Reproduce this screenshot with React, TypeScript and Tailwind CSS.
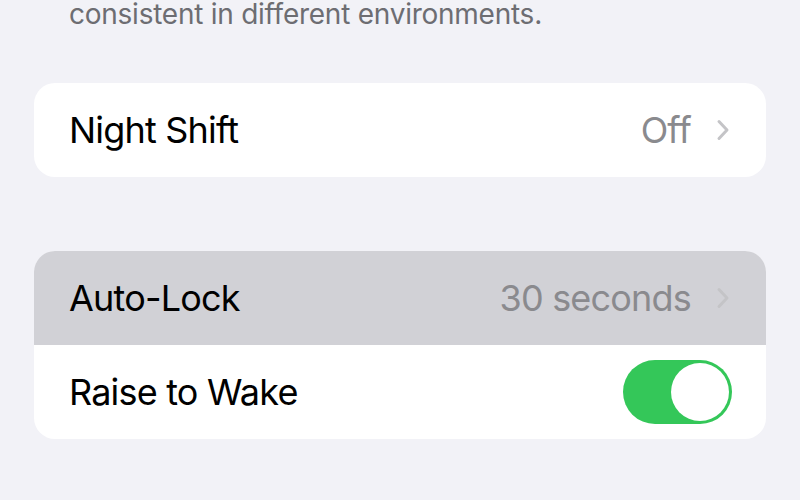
import React from "react"

function Chevron() {
  return (
    <svg width="14" height="22" viewBox="0 0 14 22" fill="none" className="ml-[25px]">
      <path d="M3 2.5 L11 11 L3 19.5" stroke="#c4c4c7" strokeWidth="3" strokeLinecap="round" strokeLinejoin="round" />
    </svg>
  )
}

function Toggle() {
  return (
    <div className="flex h-[64px] w-[109px] items-center justify-end rounded-full bg-[#34c759] p-[3px]">
      <div className="h-[58px] w-[58px] rounded-full bg-white" />
    </div>
  )
}

function Row({ label, value, pressed }: { label: string; value?: string; pressed?: boolean }) {
  return (
    <div
      className={
        "flex h-[94px] items-center justify-between pl-[35px] pr-[36px] " +
        (pressed ? "bg-[#d1d1d6]" : "bg-white")
      }
    >
      <span className="text-[36px] tracking-[-0.8px] text-black">{label}</span>
      <div className="flex items-center">
        <span className="text-[36px] tracking-[-0.8px] text-[#8a8a8e]">{value}</span>
        <Chevron />
      </div>
    </div>
  )
}

export default function App() {
  return (
    <div
      className="h-[500px] w-[800px] overflow-hidden bg-[#f2f2f7]"
      style={{ fontFamily: "Inter, 'Liberation Sans', sans-serif" }}
    >
      <p className="mt-[-3px] pl-[69px] text-[28px] leading-[34px] tracking-[-0.25px] text-[#6d6d72]">
        consistent in different environments.
      </p>

      <div className="mx-[34px] mt-[52px] overflow-hidden rounded-[21px]">
        <Row label="Night Shift" value="Off" />
      </div>

      <div className="mx-[34px] mt-[74px] overflow-hidden rounded-[21px] bg-white">
        <Row label="Auto-Lock" value="30 seconds" pressed />
        <div className="flex h-[94px] items-center justify-between pl-[35px] pr-[34px]">
          <span className="text-[36px] tracking-[-0.8px] text-black">Raise to Wake</span>
          <Toggle />
        </div>
      </div>
    </div>
  )
}
